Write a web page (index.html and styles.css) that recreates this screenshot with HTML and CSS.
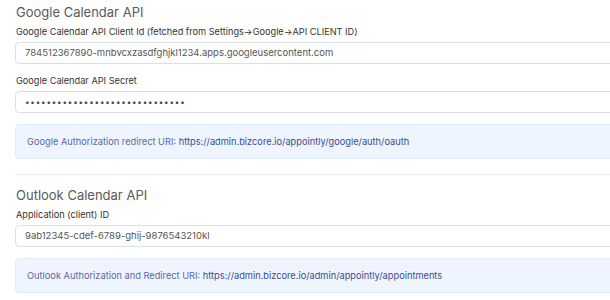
FILE: index.html
```html
<!DOCTYPE html>
<html>
<head>
<meta charset="utf-8">
<link rel="stylesheet" href="styles.css">
</head>
<body>
<div class="page">
  <section class="section">
    <h4 class="section-title">Google Calendar API</h4>
    <div class="field first">
      <label class="label">Google Calendar API Client Id (fetched from Settings→Google→API CLIENT ID)</label>
      <div class="input">784512367890-mnbvcxzasdfghjkl1234.apps.googleusercontent.com</div>
    </div>
    <div class="field">
      <label class="label">Google Calendar API Secret</label>
      <div class="input secret">••••••••••••••••••••••••••••••</div>
    </div>
    <div class="alert">Google Authorization redirect URI: <span class="uri">https://admin.bizcore.io/appointly/google/auth/oauth</span></div>
  </section>
  <hr class="divider">
  <section class="section">
    <h4 class="section-title">Outlook Calendar API</h4>
    <div class="field first">
      <label class="label">Application (client) ID</label>
      <div class="input">9ab12345-cdef-6789-ghij-9876543210kl</div>
    </div>
    <div class="alert">Outlook Authorization and Redirect URI: <span class="uri">https://admin.bizcore.io/admin/appointly/appointments</span></div>
  </section>
</div>
</body>
</html>
```
FILE: styles.css
```css
html, body {
  margin: 0;
  padding: 0;
  background: #ffffff;
  overflow: hidden;
}
body {
  font-family: Inter, "Noto Sans", sans-serif;
  color: #333;
  width: 610px;
  height: 300px;
}
.page {
  padding: 3px 0 0 15px;
  width: 640px;
}
.section-title {
  margin: 0 0 0 1px;
  font-size: 13px;
  font-weight: 400;
  color: #5a5a5a;
  line-height: 18px;
}
.field {
  margin-top: 10px;
}
.field.first {
  margin-top: 4px;
}
.label {
  display: block;
  font-size: 9.2px;
  line-height: 13px;
  color: #333;
  margin: 0 0 4px 1px;
}
.input {
  height: 22px;
  box-sizing: border-box;
  border: 1px solid #dcdfe4;
  border-radius: 4px;
  padding: 0 9px;
  font-size: 9.5px;
  line-height: 20px;
  color: #555;
}
.secret {
  letter-spacing: 0.85px;
  font-size: 8px;
  color: #444;
}
.alert {
  margin-top: 11px;
  height: 35px;
  box-sizing: border-box;
  background: #eef5fe;
  border: 1px solid #e0ecfb;
  border-radius: 4px;
  padding: 0 11px;
  font-size: 9.25px;
  line-height: 33px;
  color: #5b66a8;
}
.uri {
  color: #3d4a8f;
}
.divider {
  border: 0;
  border-top: 1px solid #eeeeee;
  margin: 15px 0 11px 0;
}
```
